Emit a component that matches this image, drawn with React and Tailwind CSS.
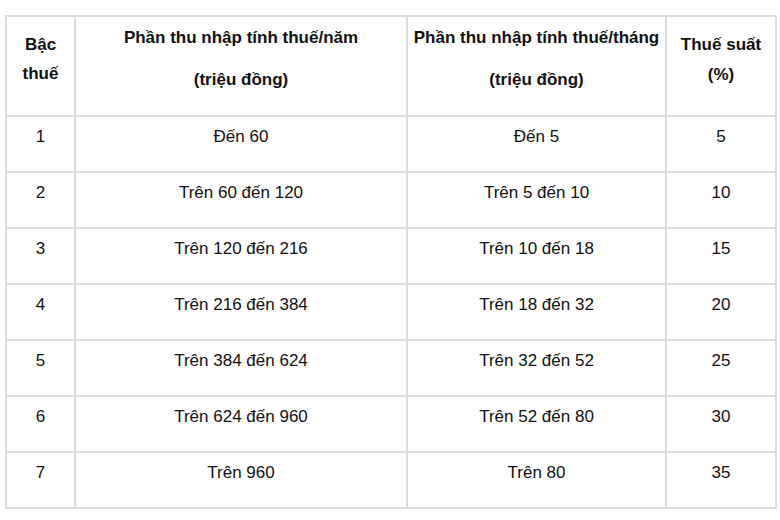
const rows = [
  ["1", "Đến 60", "Đến 5", "5"],
  ["2", "Trên 60 đến 120", "Trên 5 đến 10", "10"],
  ["3", "Trên 120 đến 216", "Trên 10 đến 18", "15"],
  ["4", "Trên 216 đến 384", "Trên 18 đến 32", "20"],
  ["5", "Trên 384 đến 624", "Trên 32 đến 52", "25"],
  ["6", "Trên 624 đến 960", "Trên 52 đến 80", "30"],
  ["7", "Trên 960", "Trên 80", "35"],
];

export default function App() {
  return (
    <div
      className="w-[780px] h-[520px] bg-white pl-[5px] pt-[15px] text-[#111]"
      style={{ fontFamily: '"Liberation Sans", Arial, sans-serif' }}
    >
      <table className="w-[770px] table-fixed border-collapse text-[17px] leading-[20px]">
        <colgroup>
          <col className="w-[69px]" />
          <col className="w-[332px]" />
          <col className="w-[259px]" />
          <col className="w-[110px]" />
        </colgroup>
        <thead>
          <tr className="h-[100px] font-bold">
            <th className="border-2 border-[#dcdcdc] align-top pt-[13px] font-bold">
              <p className="leading-[29px]">Bậc</p>
              <p className="leading-[29px]">thuế</p>
            </th>
            <th className="border-2 border-[#dcdcdc] align-top pt-[11px] font-bold">
              <p className="leading-[20px]">Phần thu nhập tính thuế/năm</p>
              <p className="leading-[20px] mt-[22px]">(triệu đồng)</p>
            </th>
            <th className="border-2 border-[#dcdcdc] align-top pt-[11px] font-bold">
              <p className="leading-[20px]">Phần thu nhập tính thuế/tháng</p>
              <p className="leading-[20px] mt-[22px]">(triệu đồng)</p>
            </th>
            <th className="border-2 border-[#dcdcdc] align-top pt-[13px] font-bold">
              <p className="leading-[30px]">Thuế suất</p>
              <p className="leading-[30px]">(%)</p>
            </th>
          </tr>
        </thead>
        <tbody>
          {rows.map((r) => (
            <tr key={r[0]} className="h-[56px]">
              {r.map((c, i) => (
                <td
                  key={i}
                  className="border-2 border-[#dcdcdc] text-center align-top pt-[10px]"
                >
                  {c}
                </td>
              ))}
            </tr>
          ))}
        </tbody>
      </table>
    </div>
  );
}
